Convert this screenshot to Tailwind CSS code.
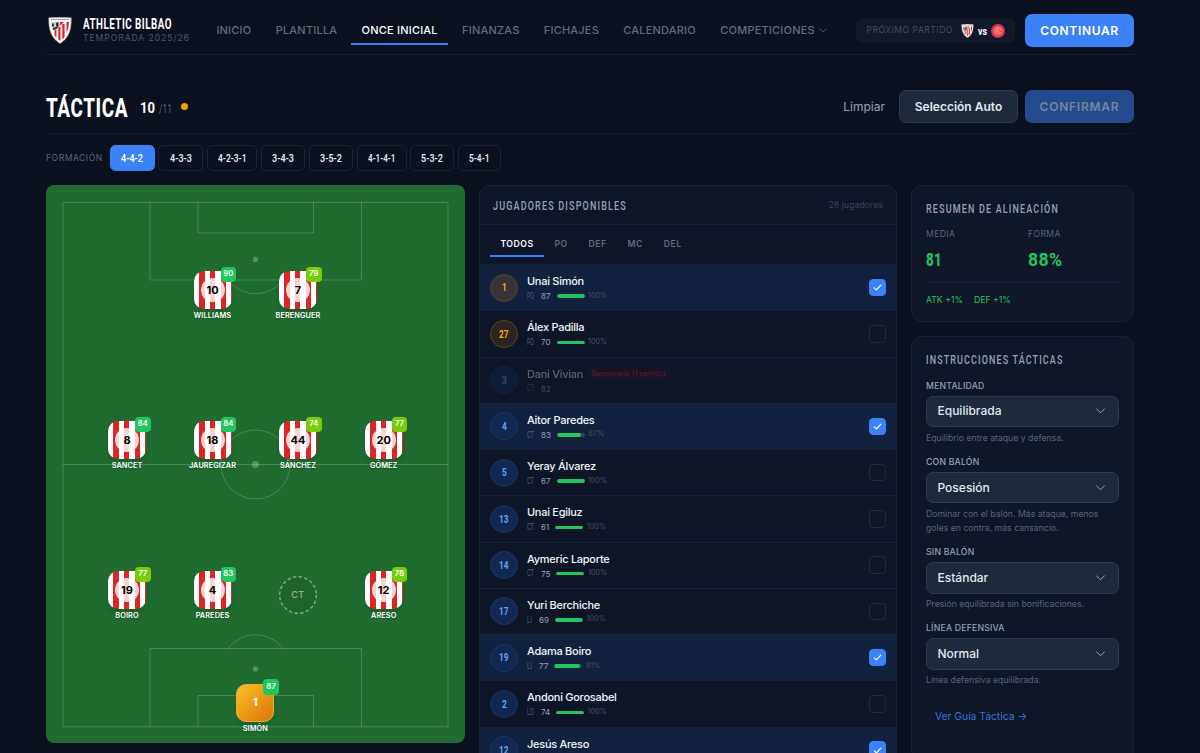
<!DOCTYPE html>
<html lang="es">
<head>
    <meta charset="UTF-8">
    <meta name="viewport" content="width=device-width, initial-scale=1.0">
    <title>Táctica - Athletic Bilbao</title>
    <script src="https://cdn.jsdelivr.net/npm/@tailwindcss/browser@4"></script>
</head>
<body class="h-[753px] overflow-hidden bg-[#0b101f] font-['Inter',sans-serif] text-slate-200">
    <!-- Shared shapes -->
    <svg class="hidden">
        <symbol id="crest" viewBox="0 0 24 27">
            <path d="M.8.8Q12-.4 23.2.8C23.6 12 21 21 12 26.5 3 21 .4 12 .8.8Z" fill="#f4f4f4" stroke="#9aa0a8" stroke-width=".6"/>
            <path d="M2.4 4.2h19.2C21.4 13.500 19 20 12 24.600 5 20 2.700 13.500 2.400 4.200Z" fill="#fff"/>
            <path d="M3 5h9v5.500L4.500 14Q3 10 3 5Z" fill="#cfd3cf"/>
            <path d="M4 6.500h2v3H4zM8 5.500h2.500V10L8 9zM5 11l5-2-1 3-4 1z" fill="#2c3536"/>
            <path d="M18.500 5H21q0 6-2.500 11.500zM14.300 7h2.300v13l-2.300 2.300zM10.300 10h2.200v13.800l-2.200-1.600zM6.500 13h2v7.800l-2-2.500zM12 5h4l-4 4z" fill="#d4272f"/>
            <path d="M3 2.500h18" stroke="#68717a" stroke-width=".9" stroke-dasharray="1.200 .6"/>
        </symbol>
        <symbol id="chevron" viewBox="0 0 10 6"><path d="m1 .8 4 4 4-4" fill="none" stroke="currentColor" stroke-width="1" stroke-linecap="round" stroke-linejoin="round"/></symbol>
    </svg>

    <div class="ml-[46px] w-[1088px]">
        <!-- Header -->
        <header class="flex h-[55px] items-center border-b border-[#182032] pt-[7px]">
            <svg class="ml-[2px] mr-[11px] h-[27px] w-6 shrink-0"><use href="#crest"/></svg>
            <div class="w-[123px] shrink-0">
                <svg class="block h-[14px] w-[90px] overflow-visible font-['Roboto'] text-[14px] font-bold"><text y="12" textLength="89" lengthAdjust="spacingAndGlyphs" letter-spacing=".7" fill="#fff">ATHLETIC BILBAO</text></svg>
                <p class="mt-px h-[13px] whitespace-nowrap text-[8.600px] leading-[13px] tracking-[.930px] text-[#4e586b]">TEMPORADA 2025/26</p>
            </div>
            <nav class="flex gap-[3.500px] text-[11px] font-medium tracking-[.2px] text-[#626c7d]">
                <a class="h-[29px] border-b-2 border-transparent px-[10.400px] leading-[29px]">INICIO</a>
                <a class="h-[29px] border-b-2 border-transparent px-[10.400px] leading-[29px]">PLANTILLA</a>
                <a class="h-[29px] whitespace-nowrap border-b-2 border-[#3b82f6] px-[10.400px] leading-[29px] text-white">ONCE INICIAL</a>
                <a class="h-[29px] border-b-2 border-transparent px-[10.400px] leading-[29px]">FINANZAS</a>
                <a class="h-[29px] border-b-2 border-transparent px-[10.400px] leading-[29px]">FICHAJES</a>
                <a class="h-[29px] border-b-2 border-transparent px-[10.400px] leading-[29px]">CALENDARIO</a>
                <a class="flex h-[29px] items-center gap-[4px] pl-[10.400px]">COMPETICIONES <svg class="h-[5px] w-2"><use href="#chevron"/></svg></a>
            </nav>
            <div class="ml-auto flex h-[25px] w-[158.500px] shrink-0 items-center rounded-[7px] bg-[#111829] pl-[10.500px]">
                <span class="w-[94.500px] whitespace-nowrap text-[8.600px] tracking-[.480px] text-[#465064]">PRÓXIMO PARTIDO</span>
                <svg class="h-[14px] w-[13px]"><use href="#crest"/></svg>
                <svg class="ml-[3.500px] h-[14px] w-[13px] overflow-visible font-['Roboto'] text-[10px] font-bold"><text y="10.500" textLength="9" lengthAdjust="spacingAndGlyphs" fill="#fff">vs</text></svg>
                <svg class="h-[14px] w-[14px]" viewBox="0 0 14 14"><circle cx="7" cy="7" r="7" fill="#e62c4b"/><circle cx="7" cy="7" r="4.500" fill="#f0525a" stroke="#f58a86" stroke-width=".6"/><path d="M5 9.500V5l2-1.200L9.500 5v1M7 6v4l2.500-1.500" fill="none" stroke="#f9b28b" stroke-width=".8"/></svg>
            </div>
            <button class="ml-[10.500px] h-[33px] w-[109px] shrink-0 rounded-[7px] bg-[#3b82f6] text-[12px] font-semibold tracking-[.650px] text-white">CONTINUAR</button>
        </header>

        <!-- Title -->
        <div class="flex h-[79px] items-center border-b border-[#131a2a] pt-[25px]">
            <svg class="h-[34px] w-[94px] overflow-visible font-['Roboto'] text-[26px] font-extrabold"><text y="27" textLength="82" lengthAdjust="spacingAndGlyphs" letter-spacing=".8" fill="#fff">TÁCTICA</text></svg>
            <svg class="h-[34px] w-[19px] overflow-visible font-['Roboto'] text-[15.500px] font-bold"><text y="22.500" textLength="15" lengthAdjust="spacingAndGlyphs" fill="#fff">10</text></svg>
            <svg class="h-[34px] w-[22px] overflow-visible font-['Roboto'] text-[12px]"><text y="22.500" textLength="13" lengthAdjust="spacingAndGlyphs" fill="#5b6579">/11</text></svg>
            <span class="size-[7px] rounded-full bg-[#f59e0b]"></span>
            <div class="ml-auto flex items-center text-[12px]">
                <button class="mr-[14px] text-[#94a3b8]">Limpiar</button>
                <button class="mr-[7px] h-[33px] w-[119px] rounded-[7px] border border-[#2f3a4d] bg-[#1e293b] font-semibold text-slate-200">Selección Auto</button>
                <button class="h-[33px] w-[109px] rounded-[7px] bg-[#234a8c] font-semibold tracking-[.75px] text-[#7585a3]">CONFIRMAR</button>
            </div>
        </div>

        <!-- Formations -->
        <div class="flex h-[51px] gap-[3.700px] pt-[11px]">
            <span class="w-[60px] whitespace-nowrap text-[8.600px] leading-[26px] tracking-[.5px] text-[#5b667b]">FORMACIÓN</span>
            <div id="formations" class="flex gap-[3.700px]"></div>
        </div>

        <div class="flex items-start">
            <!-- Pitch -->
            <div id="pitch" class="relative h-[558px] w-[419px] shrink-0 overflow-hidden rounded-[8px] bg-[#1f6b30]">
                <svg class="absolute inset-0" width="419" height="558" fill="none" stroke="#fff" stroke-opacity=".2">
                    <rect x="17" y="17.300" width="385" height="524.500"/>
                    <path d="M104 17.300V95H315.500V17.300M152 17.300V48H267.500V17.300M104 541.800V463.500H315.500V541.800M152 541.800V510.500H267.500V541.800M17 279.500H402"/>
                    <circle cx="209.500" cy="279.500" r="34.500"/>
                    <path d="M182 95a34.500 34.500 0 0 0 55 0M182 463.500a34.500 34.500 0 0 1 55 0"/>
                    <g fill="#fff" fill-opacity=".25" stroke="none"><circle cx="209.500" cy="74.500" r="2.700"/><circle cx="209.500" cy="279.500" r="3.600"/><circle cx="209.500" cy="484" r="2.700"/></g>
                </svg>
                <div class="absolute left-[233px] top-[391px] flex size-[38px] items-center justify-center">
                    <svg class="absolute inset-0" viewBox="0 0 38 38"><circle cx="19" cy="19" r="18.300" fill="#000" fill-opacity=".05" stroke="#fff" stroke-opacity=".45" stroke-width="1.400" stroke-dasharray="3.400 2.350"/></svg>
                    <span class="text-[9px] font-medium tracking-[.4px] text-white/55">CT</span>
                </div>
            </div>

            <!-- Available players -->
            <section class="ml-[14px] h-[600px] w-[418px] shrink-0 overflow-hidden rounded-[11px] border border-[#182135] bg-[#0d1526]">
                <div class="flex h-[39px] items-center justify-between border-b border-[#182135] px-[13px]">
                    <svg class="h-[14px] w-[134px] overflow-visible font-['Roboto'] text-[12.500px] font-medium"><text y="12" textLength="134" lengthAdjust="spacingAndGlyphs" letter-spacing="1.600" fill="#94a3b8">JUGADORES DISPONIBLES</text></svg>
                    <span class="text-[8.800px] text-[#3c475a]">28 jugadores</span>
                </div>
                <div class="flex h-[40px] border-b border-[#182135] px-[10px] pt-[3px] text-[8.700px] font-semibold tracking-[.5px] text-[#626c7d]">
                    <span class="h-[29px] border-b-2 border-[#3b82f6] px-[10.400px] leading-[32px] text-white">TODOS</span>
                    <span class="px-[10.400px] leading-[32px]">PO</span>
                    <span class="px-[10.400px] leading-[32px]">DEF</span>
                    <span class="px-[10.400px] leading-[32px]">MC</span>
                    <span class="px-[10.400px] leading-[32px]">DEL</span>
                </div>
                <div id="players"></div>
            </section>

            <!-- Sidebar -->
            <aside class="ml-[14px] w-[223px] shrink-0">
                <section class="h-[137px] rounded-[11px] border border-[#182135] bg-[#0e1627] px-[14px]">
                    <svg class="mt-[15px] block h-[14px] w-[132px] overflow-visible font-['Roboto'] text-[12.500px] font-medium"><text y="11.500" textLength="133" lengthAdjust="spacingAndGlyphs" letter-spacing="1.600" fill="#94a3b8">RESUMEN DE ALINEACIÓN</text></svg>
                    <div class="mt-[12px] grid h-[56px] grid-cols-[102px_1fr] border-b border-[#182135] text-[8.600px] tracking-[.4px] text-[#5b667b]">
                        <div><p class="h-[14px] leading-[14px]">MEDIA</p>
                            <svg class="mt-2 block h-[20px] w-[16px] overflow-visible font-['Roboto'] text-[19px] font-extrabold"><text y="16.500" textLength="16" lengthAdjust="spacingAndGlyphs" fill="#22c55e">81</text></svg></div>
                        <div><p class="h-[14px] leading-[14px]">FORMA</p>
                            <svg class="mt-2 block h-[20px] w-[34px] overflow-visible font-['Roboto'] text-[19px] font-bold"><text y="16.500" textLength="34.500" lengthAdjust="spacingAndGlyphs" fill="#22c55e">88%</text></svg></div>
                    </div>
                    <p class="mt-[10px] flex gap-[11px] text-[8.700px] leading-[14px] text-[#22c55e]"><span>ATK +1%</span><span>DEF +1%</span></p>
                </section>
                <section class="mt-[14px] h-[424px] rounded-[11px] border border-[#182135] bg-[#0e1627] px-[14px]">
                    <svg class="mb-[12.500px] mt-[15px] block h-[14px] w-[137px] overflow-visible font-['Roboto'] text-[12.500px] font-medium"><text y="12" textLength="137.500" lengthAdjust="spacingAndGlyphs" letter-spacing="1.600" fill="#94a3b8">INSTRUCCIONES TÁCTICAS</text></svg>
                    <div id="tactics"></div>
                    <a class="ml-[9px] mt-[21px] block text-[10.300px] leading-4 text-[#3975d8]">Ver Guía Táctica →</a>
                </section>
            </aside>
        </div>
    </div>

    <script>
        // Condensed label with a fixed drawn width
        const narrow = (t, w, size, color, weight) =>
            `<svg class="block overflow-visible font-['Roboto']" width="${w}" height="${size}"><text y="${size * 0.86}" textLength="${w}" lengthAdjust="spacingAndGlyphs" font-size="${size}" font-weight="${weight}" fill="${color}">${t}</text></svg>`;

        const formations = [['4-4-2', 45, 22], ['4-3-3', 44.500, 22], ['4-2-3-1', 50.500, 28.500], ['3-4-3', 44.500, 22], ['3-5-2', 44, 22], ['4-1-4-1', 50, 27.500], ['5-3-2', 44, 22], ['5-4-1', 42.500, 20.500]];
        document.getElementById('formations').innerHTML = formations.map(([f, w, t], i) =>
            `<button class="flex h-[26px] items-center justify-center rounded-[5.500px] border ${i ? 'border-[#1c2536]' : 'border-[#3b82f6] bg-[#3b82f6]'}" style="width:${w}px">${narrow(f, t, 11, i ? '#e2e8f0' : '#fff', 600)}</button>`).join('');

        // x and y are shirt centres on the pitch
        const lineup = [
            [166.500, 105, 10, 'WILLIAMS', 90], [252, 105, 7, 'BERENGUER', 79],
            [81, 255, 8, 'SANCET', 84], [166.500, 255, 18, 'JAUREGIZAR', 84], [252, 255, 44, 'SÁNCHEZ', 74], [337.700, 255, 20, 'GÓMEZ', 77],
            [81, 405, 19, 'BOIRO', 77], [166.500, 405, 4, 'PAREDES', 83], [337.700, 405, 12, 'ARESO', 78],
            [209.300, 517.700, 1, 'SIMÓN', 87]
        ];
        document.getElementById('pitch').insertAdjacentHTML('beforeend', lineup.map(([x, y, n, name, r]) => {
            const shirt = name === 'SIMÓN'
                ? `<div class="flex size-[38px] items-center justify-center rounded-[10px] border border-[#f0ae35] bg-linear-to-br from-[#fbbf24] to-[#d97706] text-[11px] font-bold text-white shadow-md text-shadow-2xs">${n}</div>`
                : `<div class="flex size-[38px] items-center justify-center rounded-[10px] bg-[repeating-linear-gradient(90deg,#fff_0px,#fff_5.400px,#dc2626_5.400px,#dc2626_10.700px)] shadow-md"><span class="flex size-6 items-center justify-center rounded-full bg-white/80 text-[11px] font-bold text-black">${n}</span></div>`;
            return `<div class="absolute w-[38px]" style="left:${x - 19}px;top:${y - 19}px">${shirt}
                <span class="absolute -top-[4.500px] left-[27px] flex size-[15.500px] items-center justify-center rounded-[4px] text-[7.700px] font-semibold text-white ${r >= 80 ? 'bg-[#22c55e]' : 'bg-[#7acb0c]'}">${r}</span>
                <p class="-mx-6 mt-[2px] text-center text-[7.300px] font-semibold leading-[9px] tracking-[.1px] text-white text-shadow-sm">${name}</p></div>`;
        }).join(''));

        const players = [
            [1, 'Unai Simón', 'PO', 87, 100, 1], [27, 'Álex Padilla', 'PO', 70, 100, 0], [3, 'Dani Vivian', 'CT', 82, 0, 0],
            [4, 'Aitor Paredes', 'CT', 83, 87, 1], [5, 'Yeray Álvarez', 'CT', 67, 100, 0], [13, 'Unai Egiluz', 'CT', 61, 100, 0],
            [14, 'Aymeric Laporte', 'CT', 75, 100, 0], [17, 'Yuri Berchiche', 'LI', 69, 100, 0], [19, 'Adama Boiro', 'LI', 77, 91, 1],
            [2, 'Andoni Gorosabel', 'LD', 74, 100, 0], [12, 'Jesús Areso', 'LD', 78, 100, 1]
        ];
        document.getElementById('players').innerHTML = players.map(([n, name, pos, rating, fit, on]) => {
            const keeper = pos === 'PO';
            const out = !fit;
            return `<div class="h-[46.250px] border-b border-[#182236] ${on ? 'bg-[#12213e]' : ''}"><div class="flex h-full items-center pl-[10px] pr-[10px] ${out ? 'opacity-40' : ''}">
                <div class="flex size-7 items-center justify-center rounded-full border ${keeper ? 'border-[#5c4623] ' + (on ? 'bg-[#383339]' : 'bg-[#2c2422]') : 'border-[#1b3768] bg-[#122850]'}">${narrow(n, n > 9 ? 9.5 : 4.8, 10.5, keeper ? '#eab308' : '#60a5fa', 700)}</div>
                <div class="ml-[9px] flex-1">
                    <p class="flex items-center gap-[6px] text-[11px] font-medium leading-4 tracking-[-.270px] ${out ? 'text-slate-300' : 'text-slate-100'}">${name}${out ? '<span class="rounded-[2px] bg-[#5c1422]/40 px-[2.500px] text-[6.900px] font-normal leading-[11px] tracking-[.040px] text-[#e02f42]">Sancionado (1 partido)</span>' : ''}</p>
                    <div class="mt-px flex h-3 items-center text-[8.100px]">
                        ${narrow(pos, pos === 'LI' ? 5 : 7, 8.6, '#536075', 400)}
                        <span class="ml-[7px] mr-[6px] text-[#94a3b8]">${rating}</span>
                        ${out ? '' : `<span class="h-[3.500px] w-7 overflow-hidden rounded-full bg-[#334155]"><span class="block h-full rounded-full bg-[#22c55e]" style="width:${fit}%"></span></span><span class="ml-[3.500px] text-[7.200px] text-[#465267]">${fit}%</span>`}
                    </div>
                </div>
                ${out ? '' : `<span class="flex size-[17.500px] items-center justify-center rounded-[4px] border ${on ? 'border-[#3b82f6] bg-[#3b82f6]' : 'border-[#222b3b]'}">${on ? '<svg class="size-[9px]" viewBox="0 0 9 9"><path d="m1.300 4.800 2.100 2.100 4.500-4.800" fill="none" stroke="#fff" stroke-width="1.200" stroke-linecap="round" stroke-linejoin="round"/></svg>' : ''}</span>`}
            </div></div>`;
        }).join('');

        const tactics = [
            ['MENTALIDAD', 'Equilibrada', 'Equilibrio entre ataque y defensa.'],
            ['CON BALÓN', 'Posesión', 'Dominar con el balón. Más ataque, menos goles en contra, más cansancio.'],
            ['SIN BALÓN', 'Estándar', 'Presión equilibrada sin bonificaciones.'],
            ['LÍNEA DEFENSIVA', 'Normal', 'Línea defensiva equilibrada.']
        ];
        document.getElementById('tactics').innerHTML = tactics.map(([label, value, help]) => `
            <div class="mb-[10.300px]">
                <p class="text-[8.700px] font-medium leading-[14px] tracking-[.2px] text-[#94a3b8]">${label}</p>
                <div class="mt-[3px] flex h-[31.500px] items-center justify-between rounded-[7px] border border-[#303b4d] bg-[#1e293b] pl-[10.500px] pr-3 text-[12px] font-medium text-slate-200">${value}<svg class="h-[6px] w-[11px] text-[#94a3b8]"><use href="#chevron"/></svg></div>
                <p class="mt-[3.500px] text-[8.700px] leading-[14px] text-[#5b667b]">${help}</p>
            </div>`).join('');
    </script>
</body>
</html>
